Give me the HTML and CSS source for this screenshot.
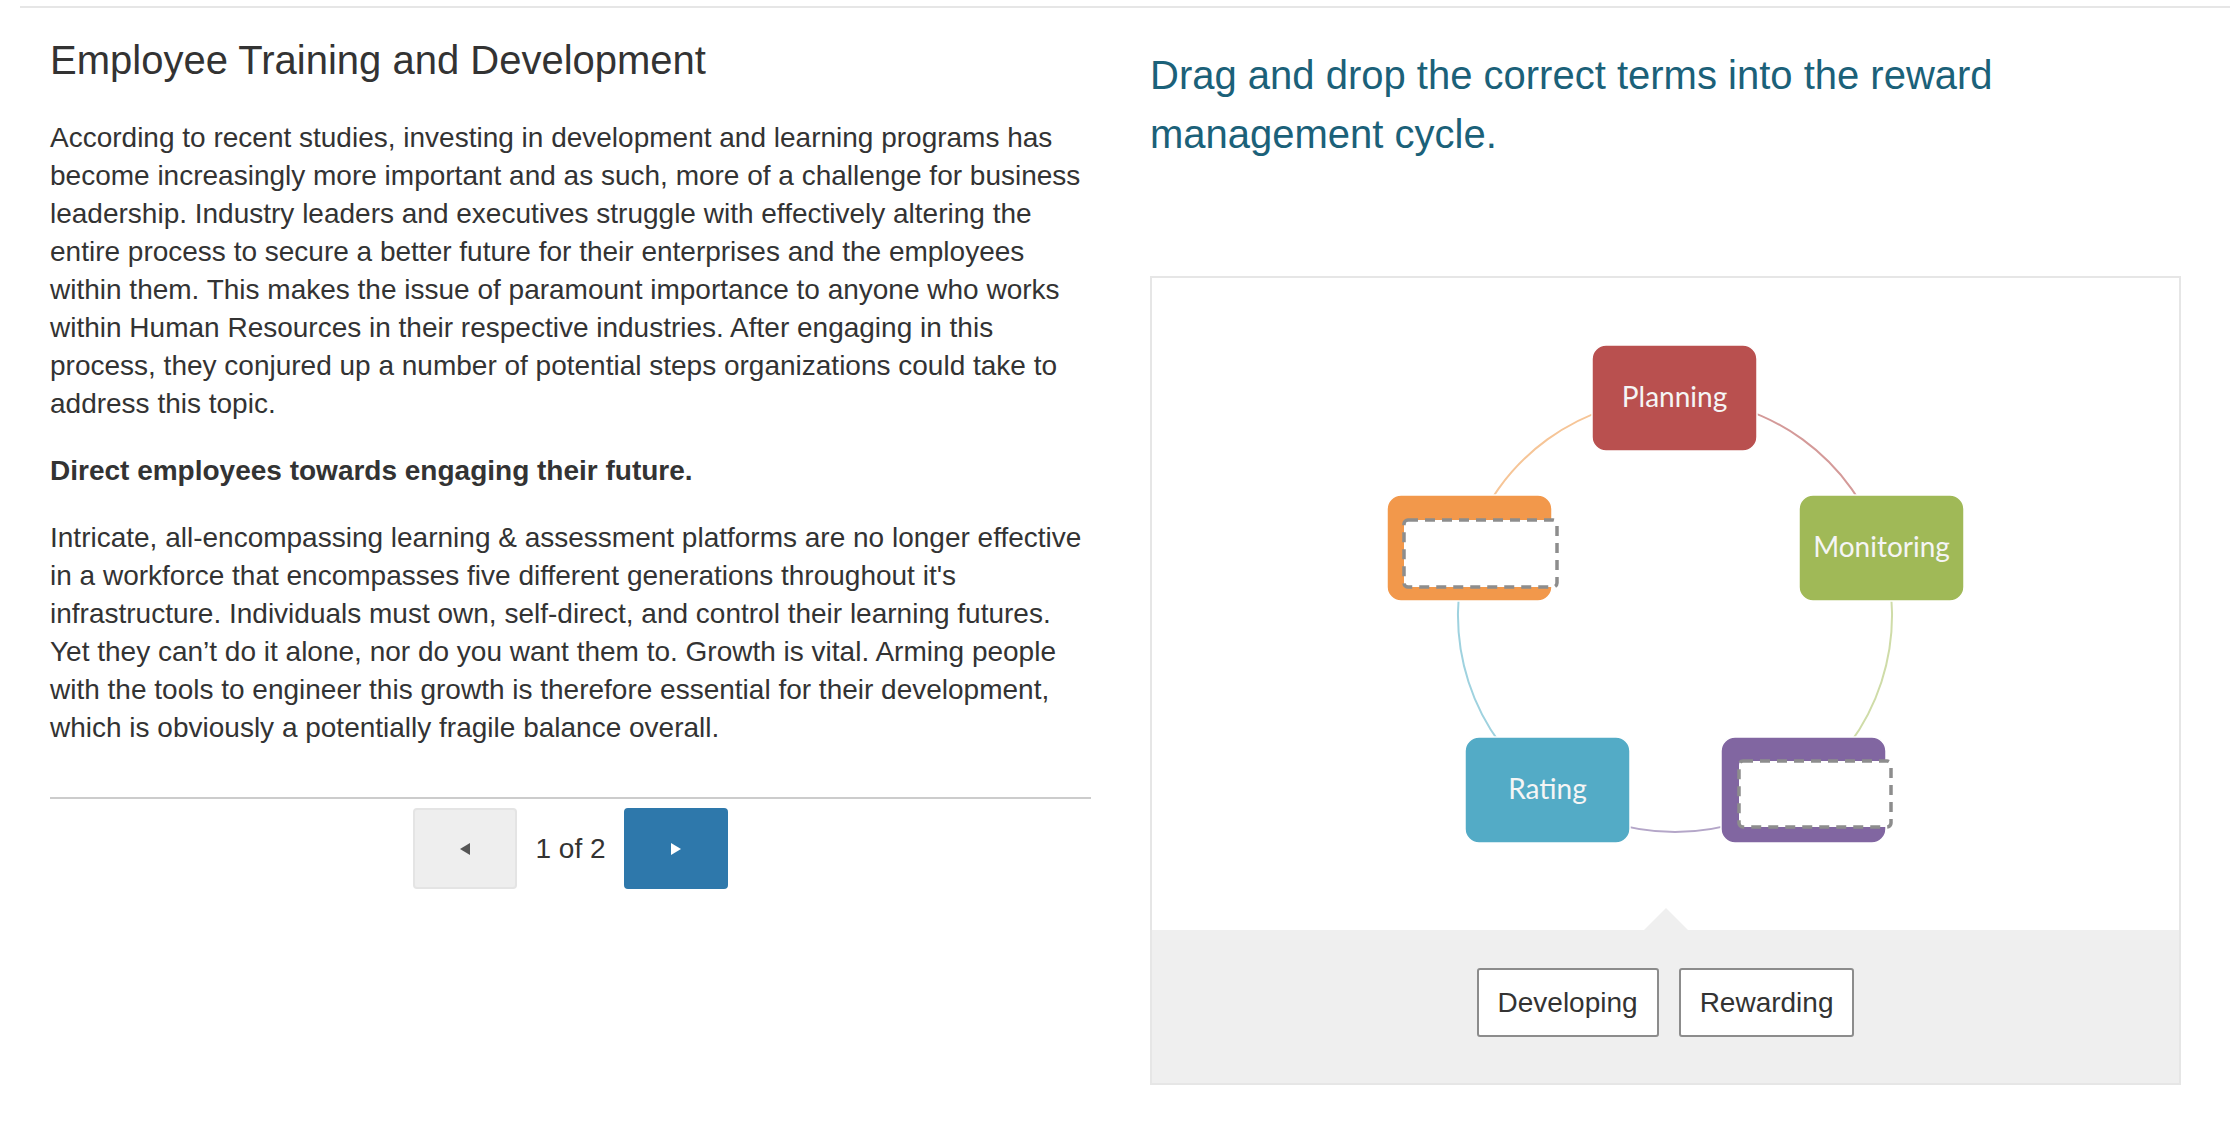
FILE: index.html
```html
<!DOCTYPE html>
<html lang="en">
<head>
    <meta charset="UTF-8">
    <title>Employee Training and Development</title>
    <link rel="stylesheet" href="styles.css">
</head>
<body>
    <div class="topbar"></div>

    <div class="page">
        <div class="lesson">
            <h1>Employee Training and Development</h1>
            <p>According to recent studies, investing in development and learning programs has become increasingly more important and as such, more of a challenge for business leadership. Industry leaders and executives struggle with effectively altering the entire process to secure a better future for their enterprises and the employees within them. This makes the issue of paramount importance to anyone who works within Human Resources in their respective industries. After engaging in this process, they conjured up a number of potential steps organizations could take to address this topic.</p>
            <p><strong>Direct employees towards engaging their future.</strong></p>
            <p>Intricate, all-encompassing learning &amp; assessment platforms are no longer effective in a workforce that encompasses five different generations throughout it's infrastructure. Individuals must own, self-direct, and control their learning futures. Yet they can’t do it alone, nor do you want them to. Growth is vital. Arming people with the tools to engineer this growth is therefore essential for their development, which is obviously a potentially fragile balance overall.</p>

            <div class="pager">
                <button class="pager-btn prev" type="button"><span class="arrow-left"></span></button>
                <span class="pager-count">1 of 2</span>
                <button class="pager-btn next" type="button"><span class="arrow-right"></span></button>
            </div>
        </div>

        <div class="activity">
            <h2>Drag and drop the correct terms into the reward management cycle.</h2>

            <div class="dnd-box">
                <div class="diagram">
                    <!-- reward management cycle -->
                    <svg width="1027" height="652" viewBox="0 0 1027 652">
                        <g fill="none" stroke-width="2">
                            <path d="M523 120 A217 217 0 0 1 729.4 269.9" stroke="#d49a99"/>
                            <path d="M729.4 269.9 A217 217 0 0 1 650.6 512.6" stroke="#cfdca8"/>
                            <path d="M650.6 512.6 A217 217 0 0 1 395.4 512.6" stroke="#b4a6c8"/>
                            <path d="M395.4 512.6 A217 217 0 0 1 316.6 269.9" stroke="#9fd2df"/>
                            <path d="M316.6 269.9 A217 217 0 0 1 523 120" stroke="#f6c597"/>
                        </g>
                        <g stroke="#fff" stroke-width="1.5">
                            <rect x="440" y="67" width="165" height="106" rx="14" fill="#b9504f"/>
                            <rect x="647" y="217" width="165" height="106" rx="14" fill="#a0b957"/>
                            <rect x="569" y="459" width="165" height="106" rx="14" fill="#8166a1"/>
                            <rect x="313" y="459" width="165" height="106" rx="14" fill="#53abc6"/>
                            <rect x="235" y="217" width="165" height="106" rx="14" fill="#f2984b"/>
                        </g>
                        <g class="node-label" text-anchor="middle">
                            <text x="522.5" y="129">Planning</text>
                            <text x="729.5" y="279">Monitoring</text>
                            <text x="395.5" y="521">Rating</text>
                        </g>
                    </svg>
                    <div class="drop-zone zone-a">
                        <svg width="157" height="71"><rect x="2" y="2" width="153" height="67" rx="4"/></svg>
                    </div>
                    <div class="drop-zone zone-b">
                        <svg width="156" height="70"><rect x="2" y="2" width="152" height="66" rx="4"/></svg>
                    </div>
                </div>

                <div class="term-bank">
                    <button class="term" type="button">Developing</button>
                    <button class="term" type="button">Rewarding</button>
                </div>
            </div>
        </div>
    </div>
</body>
</html>
```

FILE: styles.css
```css
body {
    margin: 0;
    background: #fff;
    color: #333;
    font-family: "Liberation Sans", Arial, sans-serif;
}

.topbar {
    height: 2px;
    margin: 6px 0 0 20px;
    background: #e6e6e6;
}

.page {
    display: flex;
    align-items: flex-start;
    padding-left: 50px;
}

/* left column */
.lesson {
    width: 1041px;
    padding-top: 30px;
}

.lesson h1 {
    margin: 0 0 37px;
    font-size: 40px;
    line-height: 44px;
    font-weight: normal;
    color: #333;
}

.lesson p {
    margin: 0 0 29px;
    font-size: 28px;
    line-height: 38px;
}

.pager {
    display: flex;
    justify-content: center;
    align-items: center;
    gap: 18px;
    margin-top: 50px;
    padding-top: 9px;
    border-top: 2px solid #ccc;
}

.pager-btn {
    display: flex;
    align-items: center;
    justify-content: center;
    width: 104px;
    height: 81px;
    padding: 0;
    border-radius: 4px;
    cursor: pointer;
}

.pager-btn.prev {
    background: #eee;
    border: 2px solid #e4e4e4;
}

.pager-btn.next {
    background: #2e78ab;
    border: 2px solid #2e78ab;
}

.arrow-left {
    width: 0;
    height: 0;
    border-top: 6px solid transparent;
    border-bottom: 6px solid transparent;
    border-right: 10px solid #555;
}

.arrow-right {
    width: 0;
    height: 0;
    border-top: 6px solid transparent;
    border-bottom: 6px solid transparent;
    border-left: 10px solid #fff;
}

.pager-count {
    font-size: 28px;
    line-height: 38px;
    color: #333;
}

/* right column */
.activity {
    width: 1031px;
    margin-left: 59px;
    padding-top: 38px;
}

.activity h2 {
    margin: 0;
    font-size: 40px;
    line-height: 59px;
    font-weight: normal;
    color: #1b6179;
}

.dnd-box {
    margin-top: 112px;
    border: 2px solid #e6e6e6;
}

.diagram {
    position: relative;
    height: 652px;
    background: #fff;
}

.diagram svg {
    display: block;
}

.node-label {
    font-family: Lato, "Open Sans", sans-serif;
    font-size: 28px;
    fill: #f5f5f5;
}

.drop-zone {
    position: absolute;
}

.drop-zone rect {
    fill: #fff;
    stroke: #8d8d8d;
    stroke-width: 3.5;
    stroke-dasharray: 10 7;
}

.zone-a {
    left: 250px;
    top: 240px;
}

.zone-b {
    left: 585px;
    top: 481px;
}

.term-bank {
    position: relative;
    display: flex;
    justify-content: center;
    gap: 20px;
    height: 153px;
    box-sizing: border-box;
    padding-top: 38px;
    background: #efefef;
}

.term-bank::before {
    content: "";
    position: absolute;
    left: 50%;
    top: -22px;
    margin-left: -22px;
    border-left: 22px solid transparent;
    border-right: 22px solid transparent;
    border-bottom: 22px solid #efefef;
}

.term {
    height: 69px;
    padding: 0 19px;
    background: #fff;
    border: 2px solid #8c8c8c;
    border-radius: 3px;
    font-family: "Liberation Sans", Arial, sans-serif;
    font-size: 28px;
    color: #333;
    cursor: pointer;
}
```
